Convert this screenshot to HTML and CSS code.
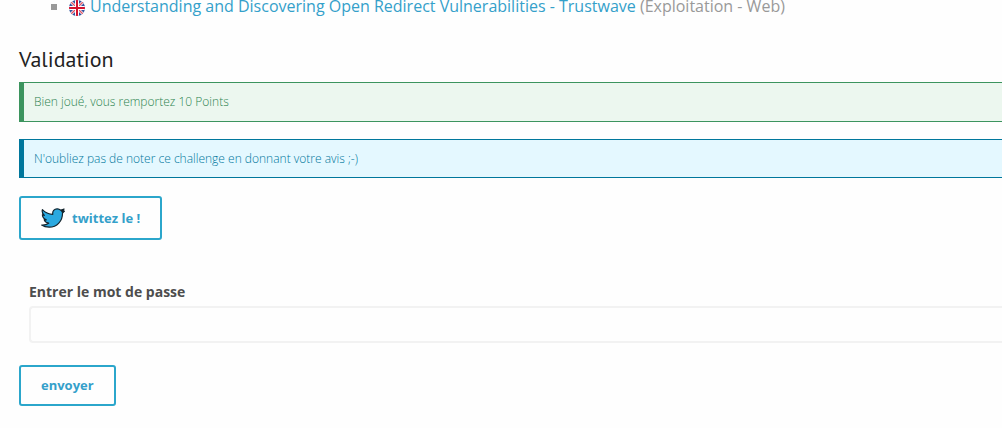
FILE: index.html
```html
<!DOCTYPE html>
<html lang="fr">
<head>
<meta charset="utf-8">
<title>Validation</title>
<link rel="stylesheet" href="styles.css">
</head>
<body>
<main class="page">
  <ul class="resources">
    <li class="resource">
      <svg class="flag" viewBox="0 0 16 16" role="img" aria-label="English">
        <defs><clipPath id="disc"><circle cx="8" cy="8" r="8"/></clipPath></defs>
        <g clip-path="url(#disc)">
          <path fill="#2f55a0" d="M0 0h16v16H0z"/>
          <path stroke="#f3dde6" stroke-width="3" d="M0 0l16 16M16 0L0 16"/>
          <path stroke="#e0505f" stroke-width="1.2" d="M0 0l16 16M16 0L0 16"/>
          <path stroke="#fff" stroke-width="4" d="M8 0v16M0 8h16"/>
          <path stroke="#d3122e" stroke-width="2" d="M8 0v16M0 8h16"/>
        </g>
      </svg>
      <span><a class="link" href="#">Understanding and Discovering Open Redirect Vulnerabilities - Trustwave</a> (Exploitation - Web)</span>
    </li>
  </ul>
  <h1 class="title">Validation</h1>
  <p class="alert alert-success">Bien joué, vous remportez 10 Points</p>
  <p class="alert alert-info">N'oubliez pas de noter ce challenge en donnant votre avis ;-)</p>
  <a class="button button-tweet" href="#">
    <svg class="bird" viewBox="0 0 24 20" aria-hidden="true">
      <path fill="#2aa9e0" stroke="#14232b" stroke-width="1.2" stroke-linejoin="round" d="M1.4 1.6C4 4.4 7.6 6.2 11.8 6.3C11.2 3.2 13.2.8 16.2.8C17.6.8 18.8 1.3 19.8 2.2L23 1L21.7 3.1L23.4 3.2L21.5 5.2C21.6 12.8 16 19.2 8.2 19.2C5.2 19.2 2.6 18.5.7 17.1C3.4 17.3 5.8 16.6 7.7 15.2C5.4 14.9 3.9 13.7 3.2 11.9L5.3 11.8C3 11 1.6 9.3 1.4 6.9L3.4 7.4C1.4 5.8.8 3.8 1.4 1.6Z"/>
      <path fill="#14232b" d="M19.5 2L23.5.8L22 3L23.7 3.1L21.3 5.2L20.2 3.5Z"/>
    </svg>
    twittez le !
  </a>
  <form class="form">
    <div class="field">
      <label class="label" for="password">Entrer le mot de passe</label>
      <input class="input" id="password" type="text">
    </div>
    <button class="button" type="button">envoyer</button>
  </form>
</main>
</body>
</html>
```
FILE: styles.css
```css
* {
  box-sizing: border-box;
}

body {
  margin: 0;
  background: #fefefe;
  color: #999;
  font-family: "Open Sans", "Noto Sans", sans-serif;
  font-size: 16px;
  overflow-x: hidden;
}

.page {
  display: flex;
  flex-direction: column;
  align-items: flex-start;
  padding-left: 19px;
}

.resources {
  margin: 0;
  padding: 0 0 0 32px;
  list-style: none;
}

.resource {
  display: flex;
  align-items: flex-start;
  line-height: 13px;
}

.resource::before {
  content: "";
  width: 6px;
  height: 6px;
  margin: 4px 12px 0 0;
  background: #999;
}

.flag {
  width: 16px;
  height: 16px;
  margin-right: 5px;
}

.link {
  color: #34a0ca;
  text-decoration: none;
}

.title {
  margin: 28px 0 8px;
  color: #222;
  font-family: "PT Sans", "Noto Sans", sans-serif;
  font-size: 22px;
  font-weight: 400;
  line-height: 30px;
}

.alert {
  align-self: stretch;
  margin: 0 0 17px;
  padding: 10px;
  border: 1px solid;
  border-left-width: 5px;
  border-right: 0;
  font-size: 12px;
  font-weight: 300;
  line-height: 18px;
}

.alert-success {
  border-color: #3c945e;
  background: #ecf7ef;
  color: #2c8450;
}

.alert-info {
  padding-bottom: 9px;
  border-color: #00779c;
  background: #e4f8ff;
  color: #00779c;
}

.button {
  display: inline-flex;
  align-items: center;
  padding: 9px 20px;
  border: 2px solid #2ba6cb;
  border-radius: 3px;
  background: #fefefe;
  color: #34a0ca;
  font-family: inherit;
  font-size: 13px;
  font-weight: 700;
  line-height: 19px;
  text-decoration: none;
}

.button-tweet {
  gap: 7px;
  margin-top: 1px;
  line-height: 22px;
}

.bird {
  width: 24px;
  height: 20px;
}

.form {
  align-self: stretch;
  margin-top: 41px;
}

.field {
  margin: 0 0 22px 10px;
}

.label {
  display: block;
  margin-bottom: 4px;
  color: #4d4d4d;
  font-size: 14px;
  font-weight: 700;
  line-height: 21px;
}

.input {
  display: block;
  width: 100%;
  height: 37px;
  padding: 8px;
  border: 2px solid #f2f2f2;
  border-right: 0;
  border-radius: 4px 0 0 4px;
  background: #fefefe;
  color: #4d4d4d;
  font: inherit;
}
```
